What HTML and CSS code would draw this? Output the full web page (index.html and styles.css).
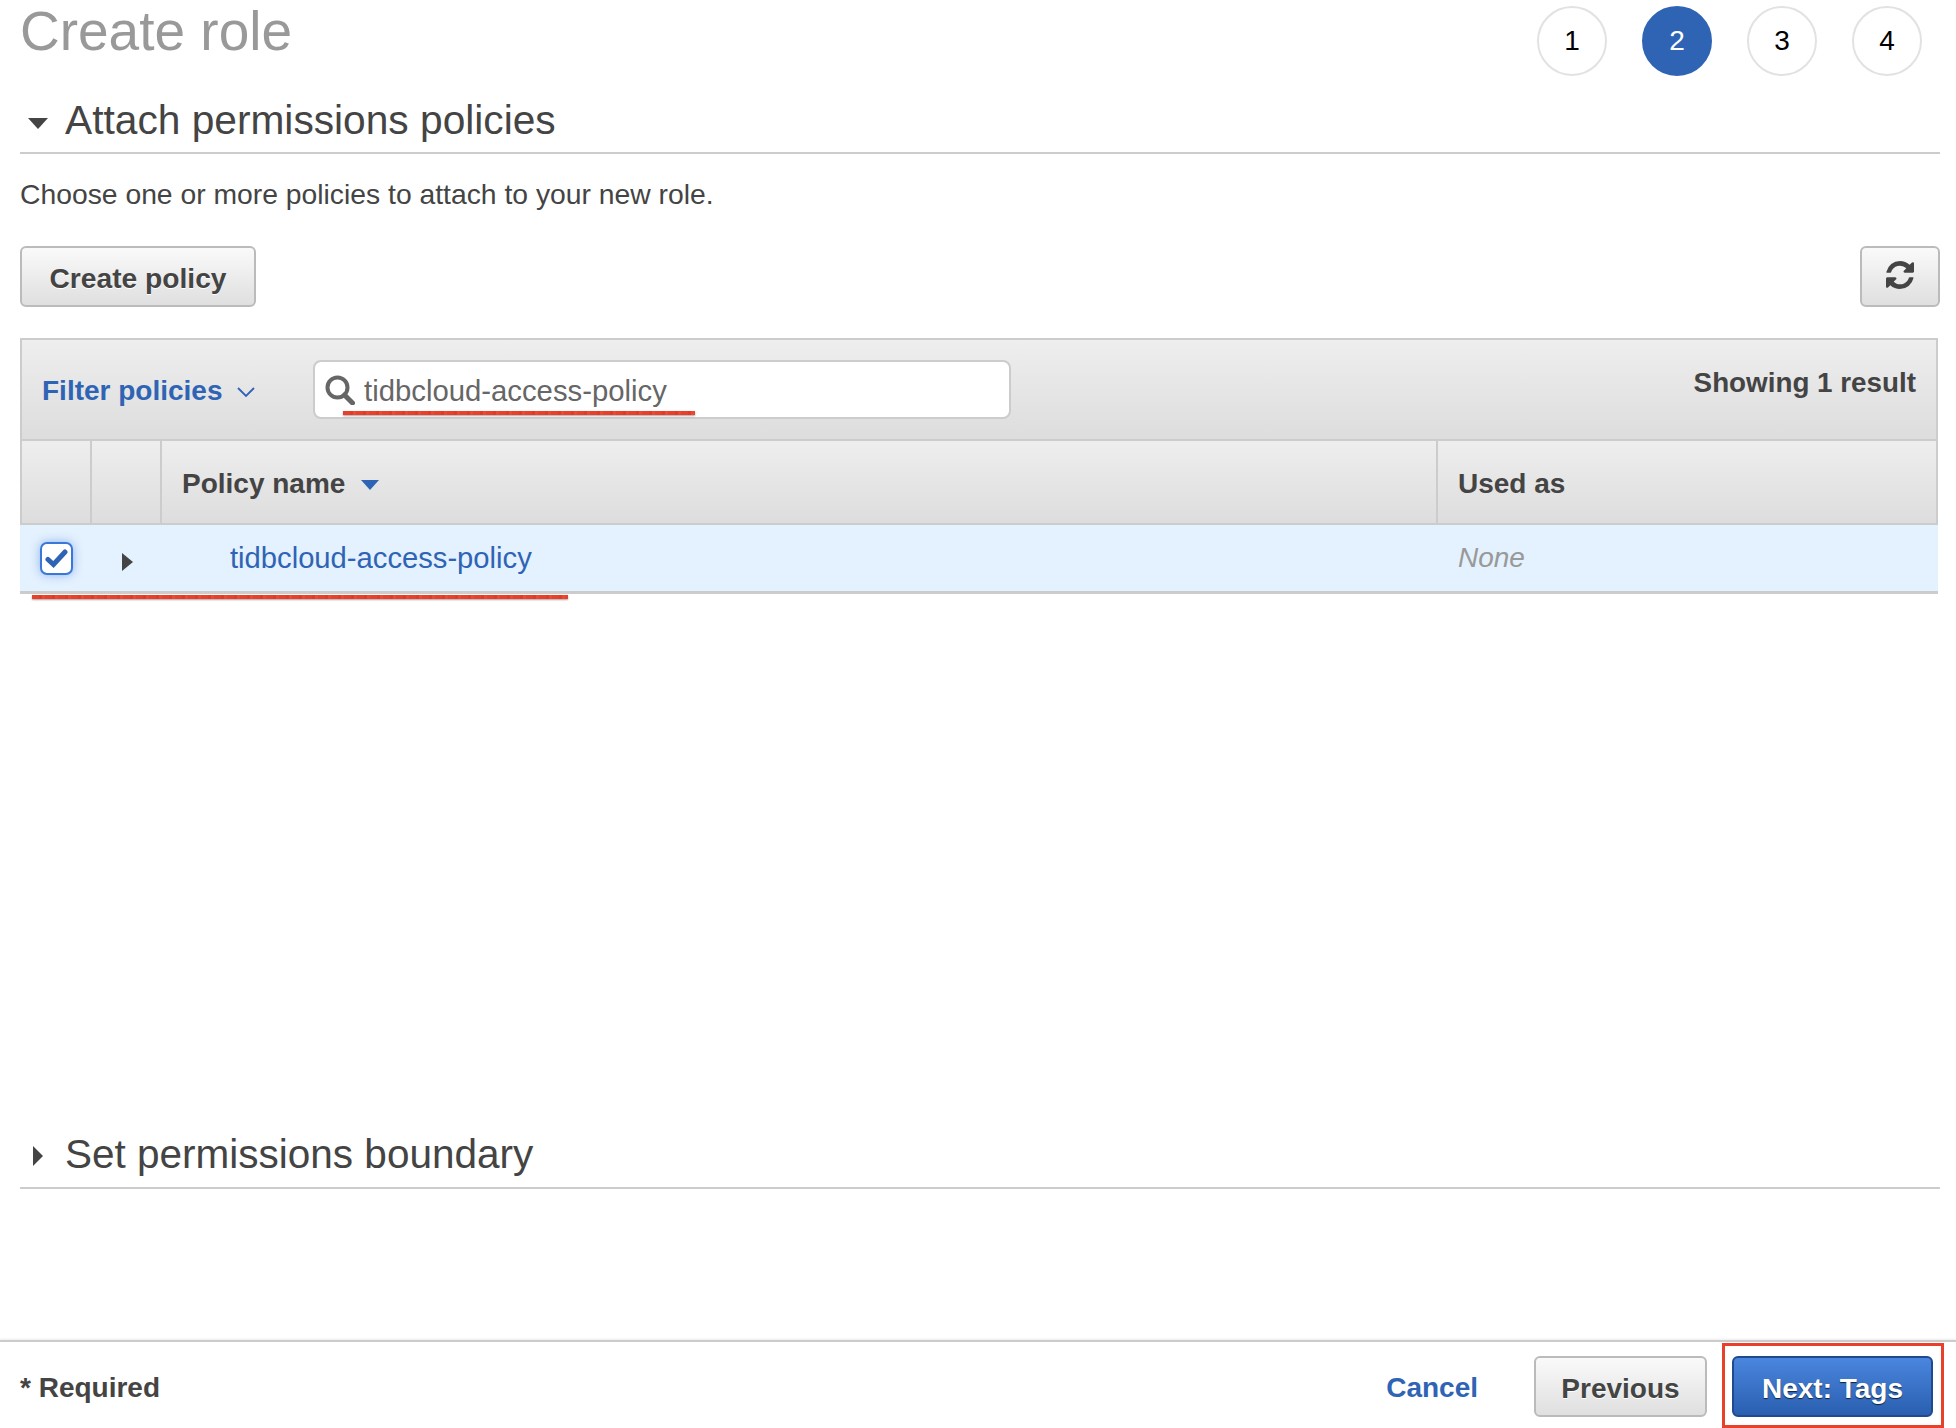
FILE: index.html
```html
<!DOCTYPE html>
<html lang="en">

<head>
    <meta charset="UTF-8">
    <title>Create role</title>
    <link rel="stylesheet" href="styles.css">
</head>

<body>
    <div class="page">
        <main class="wizard">
            <header class="wizard-head">
                <h1>Create role</h1>
                <ol class="steps">
                    <li class="step">1</li>
                    <li class="step active">2</li>
                    <li class="step">3</li>
                    <li class="step">4</li>
                </ol>
            </header>

            <!-- Attach permissions policies -->
            <h2 class="section-title">
                <span class="caret-down"></span>
                Attach permissions policies
            </h2>
            <p class="intro">Choose one or more policies to attach to your new role.</p>

            <div class="actions">
                <button class="btn create-btn" type="button">Create policy</button>
                <button class="btn refresh-btn" type="button" aria-label="Refresh">
                    <svg width="28" height="28" viewBox="0 0 1536 1536">
                        <path fill="#444" d="M1511 928q0 5-1 7-64 268-268 434.5t-478 166.5q-146 0-282.5-55t-243.5-157l-129 129q-19 19-45 19t-45-19-19-45v-448q0-26 19-45t45-19h448q26 0 45 19t19 45-19 45l-137 137q71 66 161 102t187 36q134 0 250-65t186-179q11-17 53-117 8-23 30-23h192q13 0 22.5 9.5t9.5 22.5zm25-800v448q0 26-19 45t-45 19h-448q-26 0-45-19t-19-45 19-45l138-138q-148-137-349-137-134 0-250 65t-186 179q-11 17-53 117-8 23-30 23h-199q-13 0-22.5-9.5t-9.5-22.5v-7q65-268 270-434.5t480-166.5q146 0 284 55.5t245 156.5l130-129q19-19 45-19t45 19 19 45z" />
                    </svg>
                </button>
            </div>

            <!-- Policy table -->
            <section class="policy-table">
                <div class="filter-bar">
                    <a class="filter-link" href="#">Filter policies
                        <svg class="chevron" width="18" height="10" viewBox="0 0 18 10">
                            <path d="M1 1l8 8 8-8" fill="none" stroke="#2f64b5" stroke-width="1.8" />
                        </svg>
                    </a>
                    <div class="search-box">
                        <svg width="30" height="30" viewBox="0 0 30 30">
                            <circle cx="12.5" cy="12.5" r="10" fill="none" stroke="#666" stroke-width="4" />
                            <path d="M19.5 20l8 8" fill="none" stroke="#666" stroke-width="5" stroke-linecap="round" />
                        </svg>
                        <span class="search-text">tidbcloud-access-policy</span>
                        <span class="scribble search-scribble"></span>
                    </div>
                    <span class="result-count">Showing 1 result</span>
                </div>

                <div class="table-row table-head">
                    <div class="col col-check"></div>
                    <div class="col col-expand"></div>
                    <div class="col col-name">Policy name <span class="sort-caret"></span></div>
                    <div class="col col-used">Used as</div>
                </div>

                <div class="table-row table-item">
                    <div class="col col-check">
                        <span class="checkbox">
                            <svg width="23" height="19" viewBox="0 0 23 19">
                                <path d="M3 10.5l5.5 5L20 3" fill="none" stroke="#2f64b5" stroke-width="5" stroke-linecap="round" />
                            </svg>
                        </span>
                    </div>
                    <div class="col col-expand"><span class="caret-right"></span></div>
                    <div class="col col-name"><a class="policy-link" href="#">tidbcloud-access-policy</a></div>
                    <div class="col col-used"><em>None</em></div>
                    <span class="scribble row-scribble"></span>
                </div>
            </section>

            <!-- Set permissions boundary -->
            <h2 class="section-title boundary-title">
                <span class="caret-right large"></span>
                Set permissions boundary
            </h2>
        </main>

        <footer class="wizard-foot">
            <strong class="required">* Required</strong>
            <div class="foot-actions">
                <a class="cancel-link" href="#">Cancel</a>
                <button class="btn prev-btn" type="button">Previous</button>
                <button class="btn next-btn" type="button">Next: Tags</button>
            </div>
            <span class="next-highlight"></span>
        </footer>
    </div>
</body>

</html>
```

FILE: styles.css
```css
* {
    box-sizing: border-box;
}

body {
    margin: 0;
    font-family: "Liberation Sans", Arial, sans-serif;
    font-size: 28px;
    color: #444;
    background-color: #fff;
}

a {
    color: #2f64b5;
    text-decoration: none;
}

.page {
    height: 1428px;
    display: flex;
    flex-direction: column;
    overflow: hidden;
}

.wizard {
    flex: 1;
    padding: 0 16px 0 20px;
}

/* Title and steps */
.wizard-head {
    display: flex;
    justify-content: space-between;
    align-items: flex-start;
    height: 76px;
}

h1 {
    margin: 0;
    font-size: 55px;
    font-weight: 400;
    line-height: 62px;
    color: #999;
}

.steps {
    display: flex;
    gap: 35px;
    list-style: none;
    margin: 6px 18px 0 0;
    padding: 0;
}

.step {
    width: 70px;
    height: 70px;
    display: flex;
    align-items: center;
    justify-content: center;
    border: 2px solid #e2e2e2;
    border-radius: 50%;
    font-size: 28px;
    color: #000;
}

.step.active {
    background-color: #2f64b5;
    border-color: #2f64b5;
    color: #fff;
}

/* Section headings */
.section-title {
    display: flex;
    align-items: center;
    height: 78px;
    margin: 0;
    padding: 18px 0 6px 8px;
    border-bottom: 2px solid #ccc;
    font-size: 40.7px;
    font-weight: 400;
    color: #444;
}

.caret-down {
    width: 0;
    height: 0;
    margin: 7px 17px 0 0;
    border-top: 11px solid #444;
    border-left: 10px solid transparent;
    border-right: 10px solid transparent;
}

.caret-right {
    display: inline-block;
    width: 0;
    height: 0;
    border-left: 11px solid #444;
    border-top: 9px solid transparent;
    border-bottom: 9px solid transparent;
}

.caret-right.large {
    margin: 4px 22px 0 2px;
    border-left-width: 10px;
    border-top-width: 10px;
    border-bottom-width: 10px;
}

.intro {
    margin: 0;
    padding-top: 24px;
    font-size: 28.3px;
    line-height: 32px;
}

/* Buttons */
.btn {
    height: 61px;
    padding: 3px 0 0;
    border: 2px solid #bbb;
    border-radius: 6px;
    background: linear-gradient(#fafafa, #dfdfdf);
    font-family: inherit;
    font-size: 28px;
    font-weight: 700;
    color: #444;
    text-shadow: 0 1px 0 #fff;
}

.actions {
    display: flex;
    justify-content: space-between;
    margin-top: 36px;
}

.create-btn {
    width: 236px;
    font-size: 28.2px;
}

.refresh-btn {
    width: 80px;
    padding-top: 4px;
}

/* Policy table */
.policy-table {
    width: 1918px;
    margin-top: 31px;
    border: 2px solid #ccc;
    border-bottom: 0;
}

.filter-bar {
    display: flex;
    align-items: flex-start;
    height: 101px;
    padding: 20px 20px 0 20px;
    border-bottom: 2px solid #ccc;
    background: linear-gradient(#eee, #ddd);
}

.filter-link {
    display: flex;
    align-items: center;
    width: 271px;
    height: 58px;
    padding-top: 3px;
    font-size: 28px;
    font-weight: 700;
}

.chevron {
    margin: 2px 0 0 14px;
}

.search-box {
    position: relative;
    display: flex;
    align-items: center;
    gap: 8px;
    width: 698px;
    height: 59px;
    padding-left: 10px;
    border: 2px solid #ccc;
    border-radius: 8px;
    background-color: #fff;
    font-size: 29.3px;
    color: #666;
}

.search-text {
    padding: 2px 0 0 1px;
}

.result-count {
    margin-left: auto;
    padding-top: 7px;
    font-size: 27.8px;
    font-weight: 700;
}

.table-row {
    position: relative;
    display: flex;
    align-items: center;
}

.table-head {
    height: 84px;
    border-bottom: 2px solid #ccc;
    background: linear-gradient(#eee, #ddd);
    font-weight: 700;
}

.table-head .col {
    height: 100%;
    display: flex;
    align-items: center;
    padding-top: 3px;
    border-right: 2px solid #ccc;
}

.table-head .col-used {
    border-right: 0;
}

.col-check {
    width: 70px;
    flex: none;
}

.col-expand {
    width: 70px;
    flex: none;
}

.col-name {
    width: 1276px;
    flex: none;
    padding-left: 20px;
}

.col-used {
    flex: 1;
    padding-left: 20px;
}

.sort-caret {
    width: 0;
    height: 0;
    margin: 3px 0 0 16px;
    border-top: 10px solid #2f64b5;
    border-left: 9px solid transparent;
    border-right: 9px solid transparent;
}

/* Row runs over the side borders of the table */
.table-item {
    height: 69px;
    margin: 0 -2px;
    border-bottom: 3px solid #ccc;
    background-color: #e4f1fe;
}

.table-item .col-check {
    width: 72px;
    padding-left: 20px;
}

.table-item .col-expand {
    padding: 8px 0 0 30px;
}

.table-item .col-name {
    padding-left: 68px;
    font-size: 29.2px;
}

.table-item em {
    color: #999;
}

.checkbox {
    display: flex;
    align-items: center;
    justify-content: center;
    width: 33px;
    height: 33px;
    border: 2px solid #3a78d8;
    border-radius: 7px;
    background-color: #fff;
    box-shadow: 0 0 10px rgba(70, 130, 225, 0.55);
}

/* Red hand-drawn marks on the screenshot */
.scribble {
    position: absolute;
    height: 4px;
    background: repeating-linear-gradient(90deg, #e8402a 0 7px, #e23a25 7px 10px, #ea4a34 10px 13px);
    box-shadow: 0 1px 2px rgba(0, 0, 0, 0.35);
}

.search-scribble {
    left: 28px;
    right: 314px;
    bottom: 2px;
}

.row-scribble {
    left: 12px;
    width: 536px;
    bottom: -8px;
}

.next-highlight {
    position: absolute;
    top: 1px;
    right: 12px;
    bottom: 0;
    width: 222px;
    border: 3px solid #e8402a;
    pointer-events: none;
}

.boundary-title {
    margin-top: 515px;
    height: 80px;
    padding-left: 11px;
    font-size: 40.5px;
}

/* Footer */
.wizard-foot {
    position: relative;
    flex: none;
    display: flex;
    align-items: center;
    justify-content: space-between;
    height: 88px;
    padding: 2px 23px 0 20px;
    border-top: 2px solid #ccc;
    box-shadow: 0 -1px 2px rgba(0, 0, 0, 0.08);
}

.required {
    padding-top: 4px;
}

.foot-actions {
    display: flex;
    align-items: center;
}

.cancel-link {
    margin-right: 56px;
    padding-top: 4px;
    font-weight: 700;
}

.prev-btn {
    width: 173px;
    margin-right: 25px;
    padding-top: 5px;
}

.next-btn {
    width: 201px;
    padding-top: 5px;
    border-color: #1f4a8f;
    background: linear-gradient(#4a86de, #2a5fb0);
    color: #fff;
    text-shadow: 0 1px 1px rgba(0, 0, 0, 0.7);
}
```
